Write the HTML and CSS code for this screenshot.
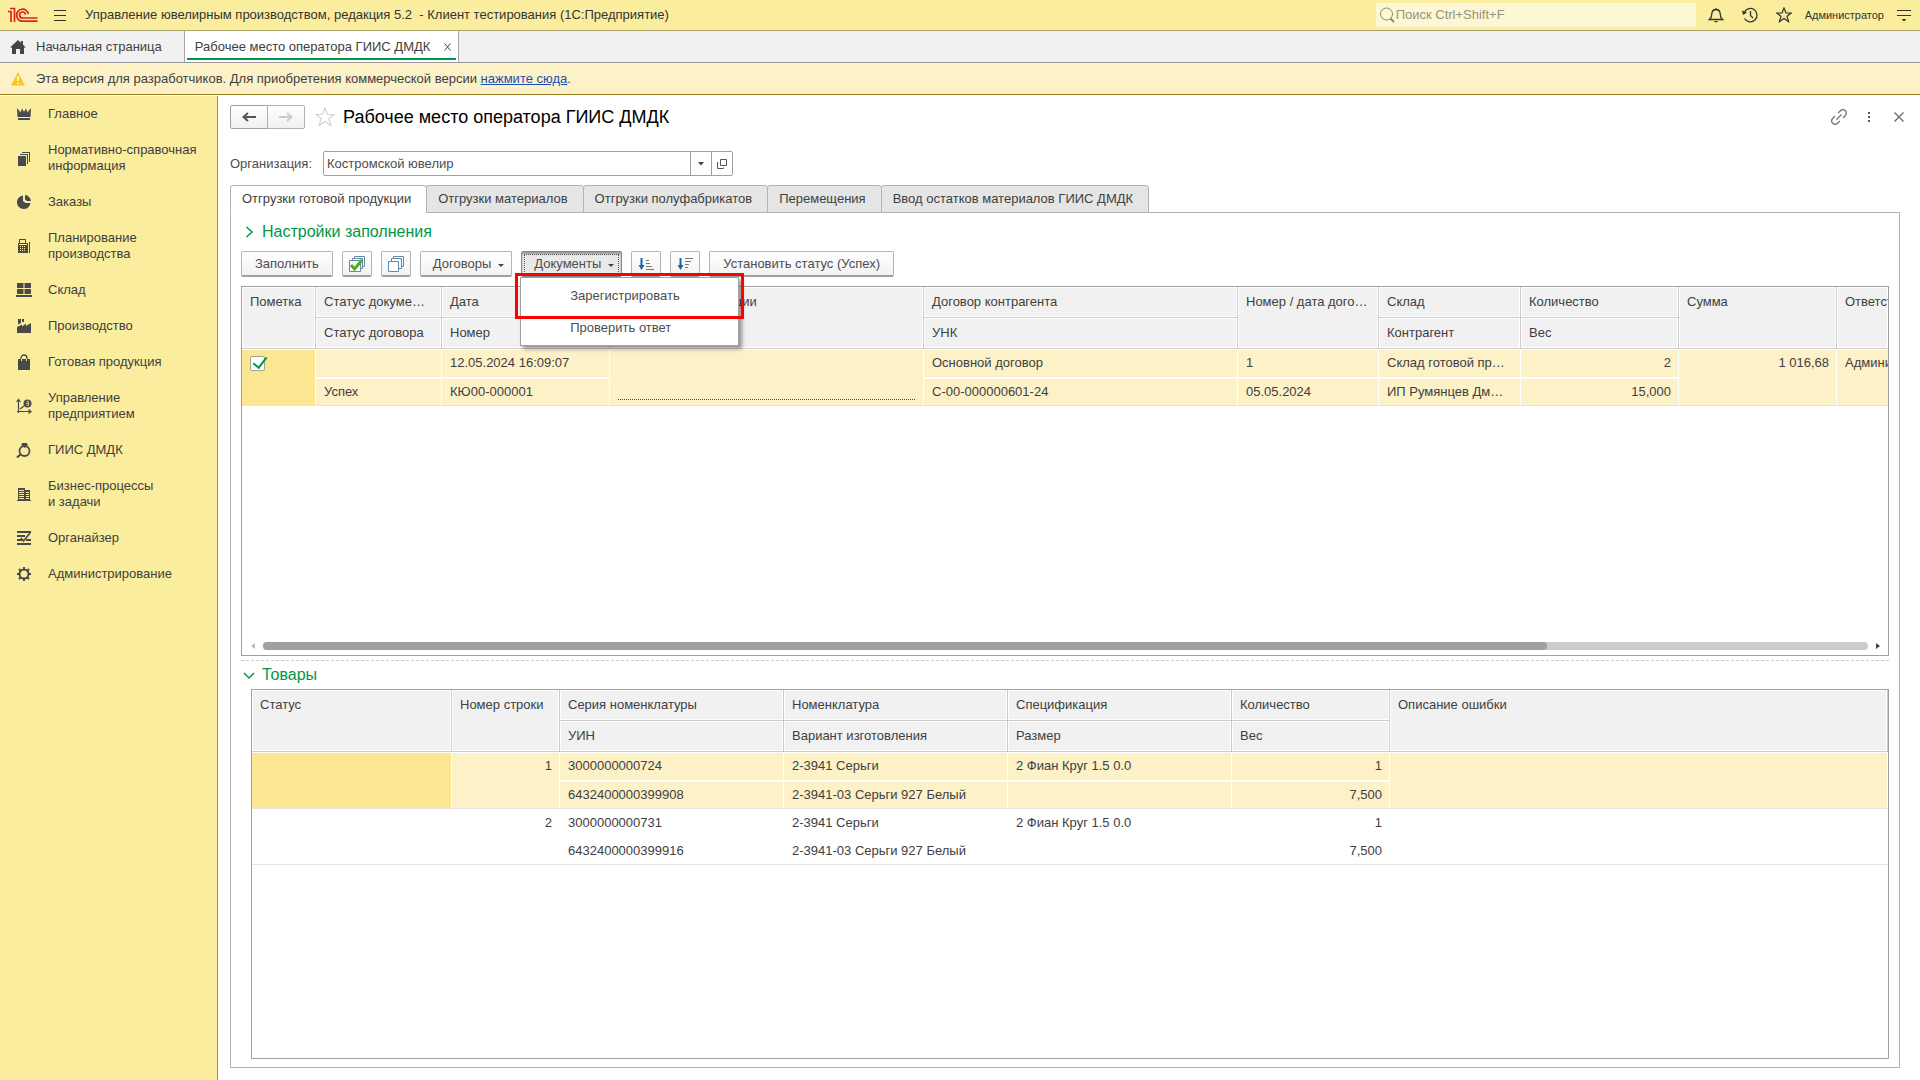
FILE: index.html
```html
<!DOCTYPE html>
<html lang="ru">
<head>
<meta charset="utf-8">
<title>Рабочее место оператора ГИИС ДМДК</title>
<link rel="stylesheet" href="styles.css">
</head>
<body>
<header class="topbar">
  <svg class="logo" width="30" height="16" viewBox="0 0 30 16" fill="none" stroke="#d9241f" stroke-width="1.700">
    <path d="M0 4.500H3V15M2 1.500H6.500V15"/>
    <path d="M20.500 7A6 6 0 1 0 14.500 14.200H29.500"/>
    <path d="M17.500 7.500A3 3 0 1 0 14.500 11H29.500"/>
  </svg>
  <button class="icon-btn menu-btn" aria-label="Меню"><svg width="12" height="12" viewBox="0 0 12 12" stroke="#333"><path d="M0 1.500H12M0 6.500H12M0 11.500H12"/></svg></button>
  <span class="app-title">Управление ювелирным производством, редакция 5.2&nbsp; - Клиент тестирования (1С:Предприятие)</span>
  <label class="search">
    <svg width="16" height="16" viewBox="0 0 16 16" fill="none" stroke="#8f8a6e"><circle cx="7.500" cy="7" r="6"/><path d="M11.500 11.500L15 15" stroke-width="2"/></svg>
    <input type="text" aria-label="Поиск" placeholder="Поиск Ctrl+Shift+F">
  </label>
  <div class="top-icons">
    <button class="icon-btn" aria-label="Уведомления"><svg width="16" height="16" viewBox="0 0 16 16" fill="none" stroke="#333" stroke-width="1.300"><path d="M8 1V2.500M1.500 12.500C4 10.500 3.500 8 4 5.500C4.500 3.500 6 2.500 8 2.500S11.500 3.500 12 5.500C12.500 8 12 10.500 14.500 12.500Z"/><path d="M5.500 14H10.500L8 15.500Z" fill="#333" stroke="none"/></svg></button>
    <button class="icon-btn" aria-label="История"><svg width="16" height="16" viewBox="0 0 16 16" fill="none" stroke="#333" stroke-width="1.300"><path d="M2 6A6.700 6.700 0 1 1 2.500 11.500"/><path d="M0 3.500L5 5.500L1 8Z" fill="#333" stroke="none"/><path d="M8.500 4V8.500L11 11"/></svg></button>
    <button class="icon-btn" aria-label="Избранное"><svg width="16" height="16" viewBox="0 0 16 16" fill="none" stroke="#333" stroke-width="1.200"><path d="M8 1L10 6H15.200L11 9.200L12.600 14.600L8 11.400L3.400 14.600L5 9.200L.8 6H6Z"/></svg></button>
  </div>
  <span class="user">Администратор</span>
  <button class="icon-btn" aria-label="Сервис"><svg width="14" height="14" viewBox="0 0 14 14"><path d="M0 2.500H14M0 7.500H14" stroke="#333"/><path d="M4.500 11H9.500L7 13.500Z" fill="#333"/></svg></button>
</header>

<nav class="window-tabs" aria-label="Открытые окна">
  <a class="window-tab" href="#home"><svg width="16" height="14" viewBox="0 0 16 14" fill="#444"><path d="M8 0L0 7.500H2V14H6V9H10V14H14V7.500H16L13 4.700V1H11V2.800Z"/></svg>Начальная страница</a>
  <div class="window-tab active"><a href="#workplace">Рабочее место оператора ГИИС ДМДК</a><button class="icon-btn" aria-label="Закрыть вкладку"><svg width="7" height="8" viewBox="0 0 7 8" stroke="#444"><path d="M.5 .5L6.500 7.500M6.500 .5L.5 7.500"/></svg></button></div>
</nav>

<div class="notice">
  <svg width="14" height="14" viewBox="0 0 14 14"><path d="M7 0L14 13.500H0Z" fill="#f9c623"/><path d="M7 4V9M7 10.500V12" stroke="#fff" stroke-width="1.500"/></svg>
  <span>Эта версия для разработчиков. Для приобретения коммерческой версии <a href="#buy">нажмите сюда</a>.</span>
</div>

<div class="workspace">
<nav class="sidebar" aria-label="Разделы">
  <a href="#main"><svg viewBox="0 0 16 16"><path d="M1 2L4.500 6.500L6 2.500L8 6L10 2.500L11.500 6.500L15 2L14.500 11H1.500ZM2 12H14V14H2Z"/></svg><span>Главное</span></a>
  <a href="#nsi"><svg viewBox="0 0 16 16"><path d="M2 6H10V16H2ZM4 4H12V14H11V5H4ZM6 2H14V12H13V3H6Z"/></svg><span>Нормативно-справочная информация</span></a>
  <a href="#orders"><svg viewBox="0 0 16 16"><path d="M7 1.500A6.800 6.800 0 1 0 14.500 9H9.500L7 7Z"/><path d="M9 1A6.500 6.500 0 0 1 15 7H11L9 5.500Z"/></svg><span>Заказы</span></a>
  <a href="#planning"><svg viewBox="0 0 16 16"><path fill-rule="evenodd" d="M3 1H10V5H12V15H2V5H3ZM4 2V5H9V2ZM3 6V7H11V6ZM4 8V9H5V8ZM6 8V9H7V8ZM8 8V9H9V8ZM4 10V11H5V10ZM6 10V11H7V10ZM8 10V11H9V10ZM4 12V13H5V12ZM6 12V13H7V12ZM8 12V13H9V12ZM13 4H14V15H13Z"/></svg><span>Планирование производства</span></a>
  <a href="#stock"><svg viewBox="0 0 16 16"><path d="M1 1H7.500V6H1ZM8.500 1H15V6H8.500ZM1 7H7.500V12H1ZM8.500 7H15V12H8.500ZM0 13H16V15H0Z"/></svg><span>Склад</span></a>
  <a href="#production"><svg viewBox="0 0 16 16"><path d="M1 15V9L6 6.500V8.500L10 5.500V8L15 5V15ZM2 1H5V5L2 6.500ZM6 1H8V4H6Z"/></svg><span>Производство</span></a>
  <a href="#goods"><svg viewBox="0 0 16 16"><path d="M2 5H14V16H2Z"/><path d="M5 8V4A3 3 0 0 1 11 4V8" fill="none" stroke="#4a4a4a" stroke-width="1.300"/><path d="M5.500 5V7M10.500 5V7" stroke="#fbed9e"/></svg><span>Готовая продукция</span></a>
  <a href="#management"><svg viewBox="0 0 16 16"><path d="M2.500 15V2M1 13.500H14M.5 4L2.500 1.500L4.500 4M12.500 11.500L15 13.500L12.500 15.500M4 11L8 8" fill="none" stroke="#4a4a4a" stroke-width="1.200"/><circle cx="11.500" cy="5.500" r="4"/><path d="M10.500 3.500H12.500V7.500H10.500M10 5.500H13" fill="none" stroke="#fbed9e" stroke-width=".7"/></svg><span>Управление предприятием</span></a>
  <a href="#giis"><svg viewBox="0 0 16 16"><circle cx="8.500" cy="9" r="5" fill="none" stroke="#4a4a4a" stroke-width="1.800"/><path d="M5 2.500L6.500 1H10.500L12 2.500L8.500 6Z"/><path d="M5 12L1 15.500" stroke="#4a4a4a" stroke-width="2"/></svg><span>ГИИС ДМДК</span></a>
  <a href="#processes"><svg viewBox="0 0 16 16"><path fill-rule="evenodd" d="M2 2H9V4H14V14H15V15H1V14H2ZM3 4V5H8V4ZM3 6V7H8V6ZM3 8V9H8V8ZM3 10V11H8V10ZM3 12V13H8V12ZM10 6V7H13V6ZM10 8V9H13V8ZM10 10V11H13V10ZM10 12V13H13V12Z"/></svg><span>Бизнес-процессы<br>и задачи</span></a>
  <a href="#organizer"><svg viewBox="0 0 16 16"><path d="M1 1H15V3H1ZM1 5H9V7H1ZM1 9H6V11H1ZM10 9H15V11H10ZM1 13H15V15H1Z"/><path d="M5 8L7.500 11L14 3" fill="none" stroke="#4a4a4a" stroke-width="1.700"/></svg><span>Органайзер</span></a>
  <a href="#admin"><svg viewBox="0 0 16 16"><circle cx="8" cy="8" r="4.500" fill="none" stroke="#4a4a4a" stroke-width="2"/><path d="M8 1V4M8 12V15M1 8H4M12 8H15M3 3L5 5M11 11L13 13M13 3L11 5M5 11L3 13" stroke="#4a4a4a" stroke-width="2"/></svg><span>Администрирование</span></a>
</nav>

<main class="page">
  <div class="page-head">
    <div class="history-nav">
      <button aria-label="Назад"><svg width="14" height="12" viewBox="0 0 14 12"><path d="M6 2L1.500 6L6 10M2 6H14" fill="none" stroke="#555" stroke-width="2"/></svg></button>
      <button aria-label="Вперед" disabled><svg width="14" height="12" viewBox="0 0 14 12"><path d="M8 2L12.500 6L8 10M12 6H0" fill="none" stroke="#ccc" stroke-width="2"/></svg></button>
    </div>
    <button class="icon-btn fav" aria-label="В избранное"><svg width="20" height="20" viewBox="0 0 20 20" fill="none" stroke="#d4d4d4" stroke-width="1.200"><path d="M10 1L12.500 7.500H19L13.800 11.500L15.800 18.500L10 14.500L4.200 18.500L6.200 11.500L1 7.500H7.500Z"/></svg></button>
    <h1>Рабочее место оператора ГИИС ДМДК</h1>
    <div class="page-tools">
      <button class="icon-btn" aria-label="Ссылка"><svg width="16" height="16" viewBox="0 0 16 16" fill="none" stroke="#777" stroke-width="1.400"><path d="M7 4L9.500 1.700A3.200 3.200 0 0 1 14.300 6.500L12 9M9 12L6.500 14.300A3.200 3.200 0 0 1 1.700 9.500L4 7M5.500 10.500L10.500 5.500"/></svg></button>
      <button class="icon-btn" aria-label="Еще"><svg width="16" height="16" viewBox="0 0 16 16" fill="#555"><path d="M7 3H9V5H7ZM7 7H9V9H7ZM7 11H9V13H7Z"/></svg></button>
      <button class="icon-btn" aria-label="Закрыть"><svg width="16" height="16" viewBox="0 0 16 16" stroke="#666" stroke-width="1.200"><path d="M3.500 3.500L12.500 12.500M12.500 3.500L3.500 12.500"/></svg></button>
    </div>
  </div>

  <div class="org-row">
    <label for="org">Организация:</label>
    <div class="combo">
      <input id="org" type="text" value="Костромской ювелир">
      <button aria-label="Выбрать"><svg width="6" height="4" viewBox="0 0 6 4" fill="#444"><path d="M0 0H6L3 3.500Z"/></svg></button>
      <button aria-label="Открыть"><svg width="10" height="10" viewBox="0 0 10 10" fill="none" stroke="#555"><path d="M3.500 .5H9.500V6.500H3.500ZM1.500 3.500H.5V9.500H6.500V8.500"/></svg></button>
    </div>
  </div>

  <div class="tabs" role="tablist">
    <button role="tab" aria-selected="true">Отгрузки готовой продукции</button>
    <button role="tab">Отгрузки материалов</button>
    <button role="tab">Отгрузки полуфабрикатов</button>
    <button role="tab">Перемещения</button>
    <button role="tab">Ввод остатков материалов ГИИС ДМДК</button>
  </div>

  <section class="panel">
    <button class="group-title"><svg width="12" height="12" viewBox="0 0 12 12"><path d="M3.500 1L9 6L3.500 11"/></svg>Настройки заполнения</button>

    <div class="toolbar">
      <button class="btn">Заполнить</button>
      <button class="btn" aria-label="Отметить все"><svg width="16" height="16" viewBox="0 0 16 16" fill="#fff" stroke="#6288a8"><path d="M5.500 .5H15.500V10.500H5.500Z"/><path d="M3.500 2.500H13.500V12.500H3.500Z"/><path d="M.5 4.500H11.500V15.500H.5Z"/><path d="M2 9L5.500 13L13 4" fill="none" stroke="#4fae1f" stroke-width="3"/></svg></button>
      <button class="btn" aria-label="Снять отметки"><svg width="16" height="16" viewBox="0 0 16 16" fill="#fff" stroke="#6288a8"><path d="M5.500 .5H15.500V10.500H5.500Z"/><path d="M3.500 2.500H13.500V12.500H3.500Z"/><path d="M.5 5.500H10.500V15.500H.5Z"/></svg></button>
      <button class="btn drop">Договоры<svg width="6" height="3" viewBox="0 0 6 3" fill="#444"><path d="M0 0H6L3 3Z"/></svg></button>
      <div class="menu-anchor">
        <button class="btn drop pressed" aria-expanded="true">Документы<svg width="6" height="3" viewBox="0 0 6 3" fill="#444"><path d="M0 0H6L3 3Z"/></svg></button>
        <div class="popup" role="menu">
          <button role="menuitem">Зарегистрировать</button>
          <button role="menuitem">Проверить ответ</button>
          <div class="highlight"></div>
        </div>
      </div>
      <button class="btn" aria-label="По возрастанию"><svg width="16" height="14" viewBox="0 0 16 14"><path d="M3.500 1V10" stroke="#1766ad" stroke-width="2"/><path d="M.5 8H6.500L3.500 13Z" fill="#1766ad"/><path d="M8 3.500H11M8 6.500H12M8 9.500H14M8 12.500H16" stroke="#777"/></svg></button>
      <button class="btn" aria-label="По убыванию"><svg width="16" height="14" viewBox="0 0 16 14"><path d="M3.500 1V10" stroke="#1766ad" stroke-width="2"/><path d="M.5 8H6.500L3.500 13Z" fill="#1766ad"/><path d="M8 1.500H16M8 4.500H14M8 7.500H12M8 10.500H11" stroke="#777"/></svg></button>
      <button class="btn">Установить статус (Успех)</button>
    </div>

    <div class="grid">
      <table class="shipments">
        <colgroup><col class="c-mark"><col class="c-status"><col class="c-date"><col class="c-wide"><col class="c-wide"><col class="c-num"><col class="c-stock"><col class="c-sum"><col class="c-sum"><col></colgroup>
        <thead>
          <tr><th rowspan="2">Пометка</th><th>Статус документа</th><th>Дата</th><th rowspan="2">Сведения организации</th><th>Договор контрагента</th><th rowspan="2">Номер / дата договора</th><th>Склад</th><th>Количество</th><th rowspan="2">Сумма</th><th rowspan="2" class="cut">Ответственный</th></tr>
          <tr><th>Статус договора</th><th>Номер</th><th>УНК</th><th>Контрагент</th><th>Вес</th></tr>
        </thead>
        <tbody>
          <tr class="selected"><td rowspan="2" class="current"><input type="checkbox" aria-label="Пометка" checked></td><td></td><td>12.05.2024 16:09:07</td><td rowspan="2" class="required"><div></div></td><td>Основной договор</td><td>1</td><td>Склад готовой продукции</td><td class="n">2</td><td rowspan="2" class="n">1 016,68</td><td rowspan="2" class="cut">Администратор</td></tr>
          <tr class="selected last"><td>Успех</td><td>КЮ00-000001</td><td>С-00-000000601-24</td><td>05.05.2024</td><td>ИП Румянцев Дмитрий</td><td class="n">15,000</td></tr>
        </tbody>
      </table>
      <div class="scroll">
        <svg width="4" height="6" viewBox="0 0 4 6" fill="#bbb"><path d="M4 0V6L0 3Z"/></svg>
        <div class="track"><div class="thumb"></div></div>
        <svg width="4" height="6" viewBox="0 0 4 6" fill="#444"><path d="M0 0V6L4 3Z"/></svg>
      </div>
    </div>

    <div class="splitter"></div>
    <button class="group-title open"><svg width="12" height="12" viewBox="0 0 12 12"><path d="M1 4L6 9L11 4"/></svg>Товары</button>

    <div class="grid inner">
      <table class="goods">
        <colgroup><col class="g-status"><col class="g-line"><col class="g-series"><col class="g-series"><col class="g-series"><col class="g-qty"><col></colgroup>
        <thead>
          <tr><th rowspan="2">Статус</th><th rowspan="2">Номер строки</th><th>Серия номенклатуры</th><th>Номенклатура</th><th>Спецификация</th><th>Количество</th><th rowspan="2">Описание ошибки</th></tr>
          <tr><th>УИН</th><th>Вариант изготовления</th><th>Размер</th><th>Вес</th></tr>
        </thead>
        <tbody>
          <tr class="selected"><td rowspan="2" class="current"></td><td rowspan="2" class="n">1</td><td>3000000000724</td><td>2-3941 Серьги</td><td>2 Фиан Круг 1.5 0.0</td><td class="n">1</td><td rowspan="2"></td></tr>
          <tr class="selected last"><td>6432400000399908</td><td>2-3941-03 Серьги 927 Белый</td><td></td><td class="n">7,500</td></tr>
          <tr><td rowspan="2"></td><td rowspan="2" class="n">2</td><td>3000000000731</td><td>2-3941 Серьги</td><td>2 Фиан Круг 1.5 0.0</td><td class="n">1</td><td rowspan="2"></td></tr>
          <tr class="last"><td>6432400000399916</td><td>2-3941-03 Серьги 927 Белый</td><td></td><td class="n">7,500</td></tr>
        </tbody>
      </table>
    </div>
  </section>
</main>
</div>
</body>
</html>
```
FILE: styles.css
```css
* { box-sizing: border-box; }
body {
  margin: 0;
  min-height: 100vh;
  display: flex;
  flex-direction: column;
  background: #fff;
  color: #404040;
  font: 13px/16px "Liberation Sans", Arial, sans-serif;
}
button, input { font: inherit; color: inherit; }
button { padding: 0; white-space: nowrap; }
svg { flex: none; display: block; }
.icon-btn { border: 0; background: none; display: flex; align-items: center; justify-content: center; }

/* Top bar */
.topbar {
  display: flex;
  align-items: center;
  height: 31px;
  padding: 0 9px 0 8px;
  background: #fbed9e;
  border-bottom: 1px solid #aaa36c;
}
.menu-btn { margin: 0 19px 0 16px; }
.app-title { flex: 1; color: #333; }
.search {
  display: flex;
  align-items: center;
  gap: 1px;
  width: 320px;
  height: 24px;
  padding-left: 3px;
  background: #fdf7d6;
  border-radius: 2px;
}
.search input { flex: 1; min-width: 0; border: 0; padding: 0; background: none; outline: 0; }
.search input::placeholder { color: #98937d; opacity: 1; }
.top-icons { display: flex; gap: 18px; margin: 0 13px 0 12px; }
.user { margin-right: 13px; font-size: 11px; color: #333; }

/* Window tabs */
.window-tabs { display: flex; height: 32px; background: #f1f1f1; border-bottom: 1px solid #999; }
.window-tab { display: flex; align-items: center; gap: 10px; padding: 0 22px 0 10px; color: #404040; text-decoration: none; }
.window-tab a { color: inherit; text-decoration: none; }
.window-tab.active {
  gap: 14px;
  padding: 0 7px 0 10px;
  border: solid #a6a6a6;
  border-width: 0 1px;
  background: linear-gradient(#009646, #009646) center bottom 2px / calc(100% - 4px) 2px no-repeat #fff;
}

/* Notice */
.notice { display: flex; align-items: center; gap: 11px; height: 32px; padding-left: 11px; background: #fdf1c8; border-bottom: 1px solid #937a1c; }
.notice a { color: #1a50b0; }

.workspace { flex: 1; display: flex; }

/* Sections */
.sidebar { width: 218px; flex: none; margin-top: 1px; background: #fbed9e; border-right: 1px solid #999157; }
.sidebar a { display: flex; align-items: center; gap: 16px; padding: 10px 8px 10px 16px; color: #404040; text-decoration: none; }
.sidebar svg { width: 16px; height: 16px; fill: #4a4a4a; }

/* Page */
.page { flex: 1; min-width: 0; display: flex; flex-direction: column; padding: 10px 20px 12px 12px; }
.page-head { display: flex; align-items: center; height: 24px; }
.history-nav { display: flex; }
.history-nav button {
  display: flex;
  align-items: center;
  justify-content: center;
  width: 38px;
  height: 24px;
  border: 1px solid #b0b0b0;
  background: linear-gradient(#fff, #f0f0f0);
}
.history-nav button:first-child { border-radius: 2px 0 0 2px; border-color: #a0a0a0; }
.history-nav button:last-child { margin-left: -1px; border-radius: 0 2px 2px 0; }
.fav { margin: 0 8px 0 10px; }
h1 { flex: 1; margin: 0; font-size: 18px; line-height: 24px; font-weight: normal; color: #000; }
.page-tools { display: flex; gap: 14px; margin-right: -7px; }

.org-row { display: flex; align-items: center; gap: 9px; margin: 22px 0 9px; color: #4d4d4d; }
.org-row label { min-width: 84px; }
.combo { display: flex; width: 410px; height: 25px; border: 1px solid #a0a0a0; border-radius: 2px; }
.combo input { flex: 1; min-width: 0; border: 0; padding: 0 3px; outline: 0; background: none; }
.combo button { display: flex; align-items: center; justify-content: center; width: 21px; border: 0; border-left: 1px solid #a0a0a0; background: none; }

.tabs { display: flex; height: 28px; margin-bottom: -1px; }
.tabs button {
  position: relative;
  margin-right: -1px;
  padding: 0 15px 0 11px;
  border: 1px solid #b3b3b3;
  border-radius: 3px 3px 0 0;
  background: #e5e5e5;
}
.tabs button[aria-selected] { background: #fff; border-bottom-color: #fff; }

.panel { flex: 1; display: flex; flex-direction: column; border: 1px solid #b3b3b3; padding: 8px 10px; }
.group-title {
  display: flex;
  align-items: center;
  gap: 7px;
  height: 22px;
  border: 0;
  background: none;
  color: #009646;
  font-size: 16px;
}
.panel > .group-title { padding-left: 2px; margin-bottom: 8px; }
.group-title svg { fill: none; stroke: #009646; stroke-width: 1.500px; }

.toolbar { display: flex; gap: 9px; margin-bottom: 9px; }
.btn {
  display: flex;
  align-items: center;
  justify-content: center;
  height: 26px;
  min-width: 30px;
  padding: 0 13px;
  border: 1px solid #b5b5b5;
  border-bottom: 2px solid #a0a0a0;
  border-radius: 2px;
  background: linear-gradient(#fff, #f2f2f2);
  color: #4d4d4d;
}
.btn[aria-label] { padding: 0 6px; }
.drop { gap: 7px; padding: 0 7px 0 12px; }
.drop svg { margin-top: 4px; }
.pressed { background: #e9e9e9; border-color: #888; outline: 1px dotted #555; outline-offset: -4px; box-shadow: inset 0 2px 2px #999; }
.menu-anchor { position: relative; }
.popup {
  position: absolute;
  z-index: 2;
  top: 26px;
  left: -1px;
  width: 219px;
  padding: 2px 0 1px;
  border: 1px solid #a0a0a0;
  background: #fff;
  box-shadow: 3px 3px 4px rgba(0, 0, 0, .4);
}
.popup button { display: block; width: 100%; height: 32px; padding-left: 49px; border: 0; background: none; text-align: left; color: #4d4d4d; }
.highlight { position: absolute; top: -5px; left: -6px; right: -6px; height: 46px; border: 3px solid #f00; }

/* Data grids */
.grid { flex: 1 1 0; min-height: 200px; display: flex; flex-direction: column; justify-content: space-between; overflow: hidden; border: 1px solid #a0a0a0; }
.grid.inner { margin-left: 10px; }
table { width: 100%; table-layout: fixed; border-collapse: separate; border-spacing: 0; }
th, td { height: 28px; padding: 0 12px 0 8px; text-align: left; vertical-align: top; font-weight: normal; white-space: nowrap; overflow: hidden; text-overflow: ellipsis; }
th {
  height: 31px;
  padding-top: 7px;
  padding-right: 9px;
  border-right: 1px solid #ccc;
  border-bottom: 1px solid #ccc;
  background: #f1f1f1;
  box-shadow: inset 0 0 0 1px #fff;
}
td { padding-top: 6px; border-right: 1px solid transparent; border-bottom: 1px solid transparent; }
tbody tr:first-child td { height: 29px; }
.selected td { background: #fdf1c8; border-right-color: #fff; border-bottom-color: #fff; box-shadow: inset 0 1px #fff; }
.selected .current { background: #fce691; }
.last td, td[rowspan] { border-bottom-color: #e3e3e3; }
.n { text-align: right; padding-right: 7px; }
.cut { text-overflow: clip; padding-right: 0; border-right: 0; }
.required { padding: 50px 8px 0; }
.required div { border-bottom: 1px dotted #f00; }
.c-mark { width: 74px; }
.c-status { width: 126px; }
.c-date { width: 168px; }
.c-wide { width: 314px; }
.c-num { width: 141px; }
.c-stock { width: 142px; }
.c-sum { width: 158px; }
.g-status { width: 200px; }
.g-line { width: 108px; }
.g-series { width: 224px; }
.g-qty { width: 158px; }
input[type="checkbox"] {
  appearance: none;
  display: block;
  width: 15px;
  height: 15px;
  margin: 1px 0 0;
  border: 1px solid #a0a0a0;
  border-radius: 2px;
  background: #fff;
}
input[type="checkbox"]:checked::after {
  content: "";
  display: block;
  width: 6px;
  height: 12px;
  margin: -3px 0 0 5px;
  border: solid #009646;
  border-width: 0 2px 2px 0;
  transform: rotate(38deg);
}

.scroll { display: flex; align-items: center; gap: 8px; height: 8px; margin: 0 8px 5px 9px; }
.track { flex: 1; height: 8px; border-radius: 4px; background: #ccc; }
.thumb { width: 80%; height: 8px; border-radius: 4px; background: #a0a0a0; }
.splitter { margin: 4px 0 3px; border-top: 1px dashed #ccc; }
.panel > .group-title.open { margin-bottom: 3px; }
```
